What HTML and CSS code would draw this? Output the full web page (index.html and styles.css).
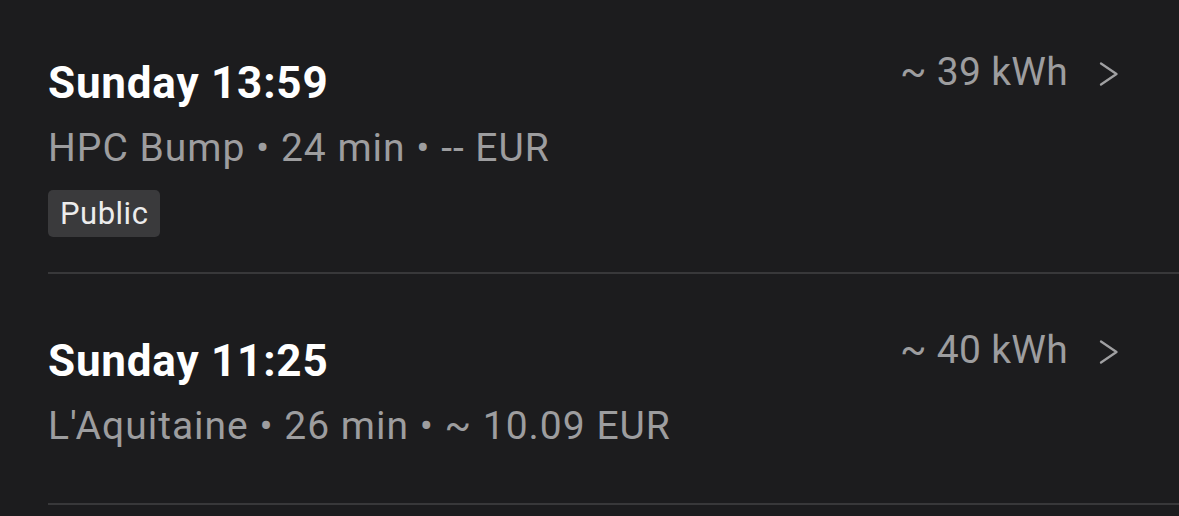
FILE: index.html
```html
<!DOCTYPE html>
<html lang="en">
<head>
<meta charset="utf-8">
<title>Charging history</title>
<link rel="stylesheet" href="styles.css">
</head>
<body>
<div class="list">
  <div class="row">
    <div class="info">
      <div class="title">Sunday 13:59</div>
      <div class="meta">HPC Bump • 24 min • -- EUR</div>
      <div class="tag">Public</div>
    </div>
    <div class="side">
      <span class="energy">~ 39 kWh</span>
      <svg class="chev" width="20" height="26" viewBox="0 0 20 26"><path d="M2 2.5 L17.5 13 L2 23.5" fill="none" stroke="#a0a0a2" stroke-width="2.3" stroke-linecap="round" stroke-linejoin="round"/></svg>
    </div>
  </div>
  <div class="row">
    <div class="info">
      <div class="title">Sunday 11:25</div>
      <div class="meta">L'Aquitaine • 26 min • ~ 10.09 EUR</div>
    </div>
    <div class="side">
      <span class="energy">~ 40 kWh</span>
      <svg class="chev" width="20" height="26" viewBox="0 0 20 26"><path d="M2 2.5 L17.5 13 L2 23.5" fill="none" stroke="#a0a0a2" stroke-width="2.3" stroke-linecap="round" stroke-linejoin="round"/></svg>
    </div>
  </div>
</div>
</body>
</html>
```
FILE: styles.css
```css
html, body {
  margin: 0;
  padding: 0;
  background: #1c1c1e;
  height: 100%;
  overflow: hidden;
}
body {
  font-family: Roboto, "Liberation Sans", sans-serif;
}
.list {
  margin-top: -4px;
  padding-left: 48px;
}
.row {
  display: flex;
  justify-content: space-between;
  align-items: flex-start;
  padding: 61px 60px 35px 0;
  border-bottom: 2px solid #38383a;
}
.info {
  display: flex;
  flex-direction: column;
  align-items: flex-start;
}
.title {
  font-size: 44px;
  line-height: 52px;
  font-weight: 700;
  letter-spacing: 0.8px;
  color: #ffffff;
}
.meta {
  margin-top: 16px;
  margin-bottom: 19px;
  font-size: 39px;
  line-height: 46px;
  letter-spacing: 1px;
  color: #9d9d9f;
}
.tag {
  height: 47px;
  box-sizing: border-box;
  padding: 6px 12px;
  font-size: 31px;
  line-height: 35px;
  letter-spacing: 0.5px;
  color: #ececec;
  background: #3a3a3c;
  border-radius: 5px;
}
.side {
  display: flex;
  align-items: center;
  gap: 31px;
  margin-top: -8px;
}
.energy {
  font-size: 39px;
  line-height: 46px;
  letter-spacing: 0.3px;
  color: #9d9d9f;
}
.chev {
  display: block;
  margin-top: 3px;
}
```
